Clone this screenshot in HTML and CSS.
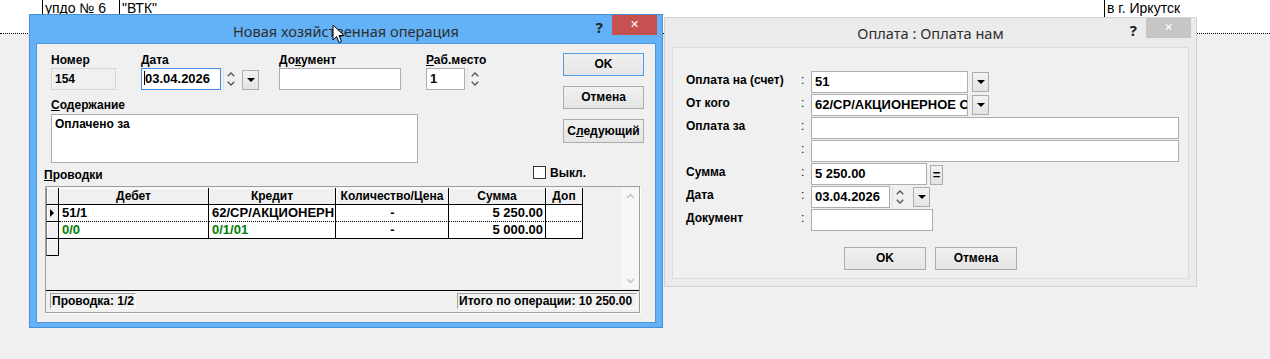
FILE: index.html
```html
<!DOCTYPE html>
<html lang="ru">
<head>
    <meta charset="UTF-8">
    <title>Новая хозяйственная операция</title>
    <link rel="stylesheet" href="styles.css">
</head>
<body>
    <!-- Sheet behind the dialogs -->
    <div class="sheet">
        <div class="sheet-row">
            <span class="cell cell-num">упдо № 6</span>
            <span class="cell cell-org">"ВТК"</span>
            <span class="cell cell-city">в г. Иркутск</span>
        </div>
    </div>

    <!-- Inactive dialog: payment -->
    <div class="window window-inactive">
        <div class="titlebar">
            Оплата : Оплата нам
            <span class="help">?</span>
            <span class="close">&#x2715;</span>
        </div>
        <div class="client pay-client">
            <div class="pay-form">
                <div class="pay-label">Оплата на (счет)</div>
                <div class="pay-colon">:</div>
                <div class="pay-field">
                    <div class="field w157">51</div>
                    <div class="dd"><span class="tri"></span></div>
                </div>

                <div class="pay-label">От кого</div>
                <div class="pay-colon">:</div>
                <div class="pay-field">
                    <div class="field w157">62/СР/АКЦИОНЕРНОЕ ОI</div>
                    <div class="dd"><span class="tri"></span></div>
                </div>

                <div class="pay-label">Оплата за</div>
                <div class="pay-colon">:</div>
                <div class="pay-field">
                    <div class="field w368"></div>
                </div>

                <div class="pay-label"></div>
                <div class="pay-colon">:</div>
                <div class="pay-field">
                    <div class="field w368"></div>
                </div>

                <div class="pay-label">Сумма</div>
                <div class="pay-colon">:</div>
                <div class="pay-field">
                    <div class="field w116">5 250.00</div>
                    <div class="dd eq">=</div>
                </div>

                <div class="pay-label">Дата</div>
                <div class="pay-colon">:</div>
                <div class="pay-field">
                    <div class="field w79">03.04.2026</div>
                    <svg class="spin" width="15" height="22" viewBox="0 0 15 22">
                        <path d="M4 8 L7.5 4.5 L11 8" fill="none" stroke="#555" stroke-width="1.4"/>
                        <path d="M4 14 L7.5 17.5 L11 14" fill="none" stroke="#555" stroke-width="1.4"/>
                    </svg>
                    <div class="dd dd-date"><span class="tri"></span></div>
                </div>

                <div class="pay-label">Документ</div>
                <div class="pay-colon">:</div>
                <div class="pay-field">
                    <div class="field w122"></div>
                </div>
            </div>
            <div class="pay-buttons">
                <div class="btn btn-wide">OK</div>
                <div class="btn btn-wide">Отмена</div>
            </div>
        </div>
    </div>

    <!-- Active dialog: new operation -->
    <div class="window window-active">
        <div class="titlebar">
            Новая хозяйственная операция
            <span class="help">?</span>
            <span class="close close-red">&#x2715;</span>
        </div>
        <div class="client op-client">
            <div class="op-top">
                <div class="op-form">
                    <div class="op-fields">
                        <div class="group">
                            <div class="lbl">Номер</div>
                            <div class="field field-readonly w65">154</div>
                        </div>
                        <div class="group g-date">
                            <div class="lbl"><u>Д</u>ата</div>
                            <div class="inline">
                                <div class="field field-focus w80"><span class="caret"></span>03.04.2026</div>
                                <svg class="spin" width="15" height="22" viewBox="0 0 15 22">
                                    <path d="M4 8 L7.5 4.5 L11 8" fill="none" stroke="#555" stroke-width="1.4"/>
                                    <path d="M4 14 L7.5 17.5 L11 14" fill="none" stroke="#555" stroke-width="1.4"/>
                                </svg>
                                <div class="dd dd-op"><span class="tri"></span></div>
                            </div>
                        </div>
                        <div class="group g-doc">
                            <div class="lbl">До<u>к</u>умент</div>
                            <div class="field w122"></div>
                        </div>
                        <div class="group g-place">
                            <div class="lbl"><u>Р</u>аб.место</div>
                            <div class="inline">
                                <div class="field w39">1</div>
                                <svg class="spin" width="15" height="22" viewBox="0 0 15 22">
                                    <path d="M4 8 L7.5 4.5 L11 8" fill="none" stroke="#555" stroke-width="1.4"/>
                                    <path d="M4 14 L7.5 17.5 L11 14" fill="none" stroke="#555" stroke-width="1.4"/>
                                </svg>
                            </div>
                        </div>
                    </div>
                    <div class="lbl lbl-memo"><u>С</u>одержание</div>
                    <div class="field memo">Оплачено за</div>
                </div>
                <div class="op-buttons">
                    <div class="btn btn-default">OK</div>
                    <div class="btn">Отмена</div>
                    <div class="btn btn-tall">С<u>л</u>едующий</div>
                </div>
            </div>

            <div class="entries-head">
                <span class="entries-title"><u>П</u>роводки</span>
                <label class="check"><span class="box"></span>Выкл.</label>
            </div>

            <div class="entries">
                <div class="grid-area">
                    <table class="grid">
                        <colgroup>
                            <col style="width: 13px">
                            <col style="width: 150px">
                            <col style="width: 127px">
                            <col style="width: 113px">
                            <col style="width: 97px">
                            <col style="width: 37px">
                        </colgroup>
                        <tr>
                            <th class="ind"></th>
                            <th>Дебет</th>
                            <th>Кредит</th>
                            <th>Количество/Цена</th>
                            <th>Сумма</th>
                            <th>Доп</th>
                        </tr>
                        <tr class="current">
                            <td class="ind"><span class="marker"></span></td>
                            <td>51/1</td>
                            <td>62/СР/АКЦИОНЕРН</td>
                            <td class="c">-</td>
                            <td class="r">5 250.00</td>
                            <td></td>
                        </tr>
                        <tr>
                            <td class="ind"></td>
                            <td class="green">0/0</td>
                            <td class="green">0/1/01</td>
                            <td class="c">-</td>
                            <td class="r">5 000.00</td>
                            <td></td>
                        </tr>
                        <tr class="empty">
                            <td class="ind"></td>
                        </tr>
                    </table>
                    <div class="vscroll">
                        <svg width="17" height="17" viewBox="0 0 17 17"><path d="M5 10 L8.5 6.5 L12 10" fill="none" stroke="#c4c4c4" stroke-width="1.5"/></svg>
                        <svg width="17" height="17" viewBox="0 0 17 17"><path d="M5 7 L8.5 10.5 L12 7" fill="none" stroke="#c4c4c4" stroke-width="1.5"/></svg>
                    </div>
                </div>
                <div class="status">
                    <span class="panel">Проводка: 1/2</span>
                    <span class="panel panel-total">Итого по операции: 10 250.00</span>
                </div>
            </div>
        </div>
    </div>

    <!-- mouse pointer over the title -->
    <svg class="cursor" width="14" height="21" viewBox="0 0 14 21">
        <path d="M1 1 L1 16 L4.5 12.5 L7 18.5 L9.5 17.5 L7 11.5 L12 11.5 Z" fill="#fff" stroke="#000" stroke-width="1"/>
    </svg>
</body>
</html>
```

FILE: styles.css
```css
/* Desktop with two old-style dialogs */
* {
    box-sizing: border-box;
}

body {
    margin: 0;
    width: 1270px;
    height: 359px;
    overflow: hidden;
    position: relative;
    background: #f0f0f0;
    font-family: "Liberation Sans", Arial, sans-serif;
    font-size: 12px;
    font-weight: bold;
    color: #000;
}

u {
    text-decoration: underline;
}

/* sheet strip at the top */
.sheet {
    height: 34px;
    background: #fff;
    border-bottom: 1px dotted #000;
}

.sheet-row {
    display: flex;
    height: 17px;
    font-size: 14px;
    font-weight: normal;
    line-height: 16px;
}

.cell {
    border-left: 1px solid #000;
    padding-left: 2px;
    white-space: nowrap;
}

.cell-num {
    margin-left: 42px;
    width: 77px;
}

.cell-org {
    width: 985px;
}

.cell-city {
    flex: 1;
}

/* windows */
.window {
    position: absolute;
    border: 1px solid;
    padding: 0 7px 7px;
}

.window-active {
    left: 29px;
    top: 14px;
    width: 634px;
    height: 314px;
    padding-bottom: 5px;
    background: #63b1f6;
    border-color: #4a8fd3;
}

.window-inactive {
    left: 664px;
    top: 17px;
    width: 533px;
    height: 270px;
    background: #ebebeb;
    border-color: #d2d2d2;
}

.titlebar {
    position: relative;
    height: 29px;
    text-align: center;
    font-family: "Noto Sans", "Open Sans", sans-serif;
    font-size: 14.6px;
    font-weight: normal;
    line-height: 32px;
    color: #2f2f2f;
}

.window-inactive .titlebar {
    line-height: 31px;
}

.help {
    position: absolute;
    top: 3px;
    right: 52px;
    font-size: 15px;
    font-weight: bold;
    line-height: 18px;
    color: #222;
}

.close {
    position: absolute;
    top: 0;
    right: -2px;
    width: 45px;
    height: 20px;
    background: #c6c6c6;
    color: #fff;
    font-family: "DejaVu Sans", sans-serif;
    font-size: 11px;
    font-weight: bold;
    line-height: 20px;
    text-align: center;
}

.close-red {
    background: #c75050;
}

.client {
    background: #f0f0f0;
}

.op-client {
    height: 278px;
    box-shadow: 0 0 0 1px #4e96da;
    padding: 9px 11px 0 7px;
}

.pay-client {
    height: 232px;
    border: 1px solid #dcdcdc;
    padding: 23px 0 0 13px;
}

/* common controls */
.field {
    height: 22px;
    border: 1px solid #abadb3;
    background: #fff;
    padding: 0 3px;
    font-size: 13px;
    line-height: 20px;
    white-space: nowrap;
    overflow: hidden;
}

.field-readonly {
    background: #f0f0f0;
    border-color: #d5d5d5;
    font-size: 12px;
}

.field-focus {
    border-color: #3d8ee2;
    padding-left: 2px;
}

.caret {
    display: inline-block;
    width: 1px;
    height: 14px;
    background: #000;
    vertical-align: -2px;
}

.w39 { width: 39px; }
.w65 { width: 65px; }
.w79 { width: 79px; }
.w80 { width: 80px; }
.w116 { width: 116px; }
.w122 { width: 122px; }
.w157 { width: 157px; }
.w368 { width: 368px; }

.spin {
    display: block;
    margin-left: 2px;
    border-left: 1px solid #e2e2e2;
}

.dd {
    width: 17px;
    height: 20px;
    margin-left: 4px;
    margin-top: 1px;
    border: 1px solid #acacac;
    background: linear-gradient(#f2f2f2, #e3e3e3);
    display: flex;
    align-items: center;
    justify-content: center;
}

.tri {
    width: 0;
    height: 0;
    border-left: 4px solid transparent;
    border-right: 4px solid transparent;
    border-top: 4px solid #000;
}

.eq {
    width: 13px;
    margin-left: 3px;
    margin-top: 2px;
    font-size: 13px;
    line-height: 16px;
}

.dd-date {
    margin-left: 6px;
}

.dd-op {
    margin-top: 2px;
}

.btn {
    width: 81px;
    height: 23px;
    border: 1px solid #acacac;
    background: linear-gradient(#f0f0f0, #e5e5e5);
    text-align: center;
    line-height: 21px;
}

.btn-default {
    border-color: #4f9de6;
}

.btn-tall {
    height: 24px;
    line-height: 22px;
}

.btn-wide {
    width: 82px;
}

/* new operation dialog */
.op-top {
    display: flex;
}

.op-form {
    margin-left: 7px;
}

.op-fields {
    display: flex;
}

.lbl {
    height: 15px;
    line-height: 14px;
}

.inline {
    display: flex;
    align-items: flex-start;
}

.g-date {
    margin-left: 25px;
}

.g-doc {
    margin-left: 20px;
}

.g-place {
    margin-left: 25px;
}

.lbl-memo {
    margin-top: 8px;
    height: 16px;
}

.memo {
    width: 367px;
    height: 49px;
    font-size: 12px;
    line-height: 18px;
}

.op-buttons {
    margin-left: auto;
    display: flex;
    flex-direction: column;
    gap: 10px;
}

.entries-head {
    display: flex;
    height: 23px;
}

.entries-title {
    align-self: flex-end;
    margin-bottom: 4px;
    line-height: 14px;
}

.check {
    display: flex;
    align-items: center;
    height: 13px;
    margin: 3px 58px 0 auto;
    font-weight: bold;
}

.box {
    width: 13px;
    height: 13px;
    border: 1px solid #333;
    background: #fff;
    margin-right: 4px;
}

.entries {
    margin-left: 1px;
    width: 595px;
    height: 127px;
    border: 1px solid #a0a0a0;
    box-shadow: 1px 1px 0 #fff;
}

.grid-area {
    display: flex;
    height: 103px;
    padding-top: 1px;
}

.grid {
    table-layout: fixed;
    width: 537px;
    border-collapse: separate;
    border-spacing: 0;
    align-self: flex-start;
}

.grid th,
.grid td {
    padding: 0 2px;
    height: 17px;
    line-height: 16px;
    white-space: nowrap;
    overflow: hidden;
    border-right: 1px solid #000;
    border-bottom: 1px solid #000;
}

.grid th {
    background: #f0f0f0;
    box-shadow: inset 1px 1px 0 #fff;
    font-weight: bold;
    text-align: center;
}

.grid td {
    background: #fff;
    text-align: left;
    padding-left: 3px;
    font-size: 13px;
}

.grid .ind {
    background: #f0f0f0;
    box-shadow: inset 1px 1px 0 #fff;
    border-left: 1px solid #808080;
    padding: 0;
}

.grid .c {
    text-align: center;
}

.grid .r {
    text-align: right;
}

.current td {
    border-bottom-style: dotted;
}

.current td.ind {
    border-bottom-style: solid;
}

.grid .green {
    color: #008000;
}

.marker {
    display: block;
    width: 0;
    height: 0;
    margin-left: 3px;
    border-top: 4px solid transparent;
    border-bottom: 4px solid transparent;
    border-left: 4px solid #000;
}

.vscroll {
    margin-left: auto;
    width: 17px;
    height: 101px;
    background: #f7f7f7;
    display: flex;
    flex-direction: column;
    justify-content: space-between;
}

.vscroll svg {
    display: block;
}

.status {
    display: flex;
    justify-content: space-between;
    height: 22px;
    border-top: 1px solid #000;
    padding: 2px 2px 0 4px;
}

.panel {
    height: 16px;
    line-height: 14px;
    padding: 0 1px;
    border: 1px solid;
    border-color: #a0a0a0 #fff #fff #a0a0a0;
    background: #f0f0f0;
}

.panel-total {
    width: 180px;
}

/* payment dialog */
.pay-form {
    display: grid;
    grid-template-columns: 114px 11px auto;
    grid-auto-rows: 23px;
}

.pay-label,
.pay-colon {
    padding-top: 2px;
    line-height: 14px;
    white-space: nowrap;
}

.pay-colon {
    font-weight: normal;
    padding-left: 1px;
}

.pay-field {
    display: flex;
    align-items: flex-start;
}

.pay-buttons {
    display: flex;
    gap: 9px;
    margin: 15px 0 0 158px;
}

/* pointer */
.cursor {
    position: absolute;
    left: 332px;
    top: 24px;
}
```
